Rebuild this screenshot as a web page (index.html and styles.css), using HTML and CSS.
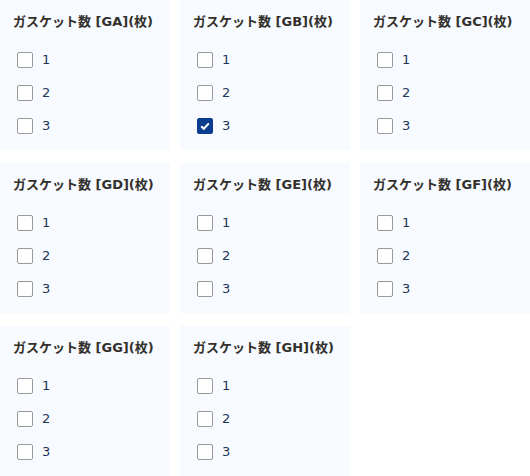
FILE: index.html
```html
<!DOCTYPE html>
<html lang="ja">
<head>
  <meta charset="UTF-8">
  <title>ガスケット数</title>
  <link rel="stylesheet" href="styles.css">
</head>
<body>
  <div class="grid">
    <div class="card">
      <div class="title">ガスケット数 [GA](枚)</div>
      <label class="opt"><span class="box"></span>1</label>
      <label class="opt"><span class="box"></span>2</label>
      <label class="opt"><span class="box"></span>3</label>
    </div>
    <div class="card">
      <div class="title">ガスケット数 [GB](枚)</div>
      <label class="opt"><span class="box"></span>1</label>
      <label class="opt"><span class="box"></span>2</label>
      <label class="opt"><span class="box checked"><svg width="12" height="12" viewBox="0 0 12 12"><path d="M2.2 6.3 L4.8 8.8 L9.8 3.4" fill="none" stroke="#fff" stroke-width="2"/></svg></span>3</label>
    </div>
    <div class="card">
      <div class="title">ガスケット数 [GC](枚)</div>
      <label class="opt"><span class="box"></span>1</label>
      <label class="opt"><span class="box"></span>2</label>
      <label class="opt"><span class="box"></span>3</label>
    </div>
    <div class="card">
      <div class="title">ガスケット数 [GD](枚)</div>
      <label class="opt"><span class="box"></span>1</label>
      <label class="opt"><span class="box"></span>2</label>
      <label class="opt"><span class="box"></span>3</label>
    </div>
    <div class="card">
      <div class="title">ガスケット数 [GE](枚)</div>
      <label class="opt"><span class="box"></span>1</label>
      <label class="opt"><span class="box"></span>2</label>
      <label class="opt"><span class="box"></span>3</label>
    </div>
    <div class="card">
      <div class="title">ガスケット数 [GF](枚)</div>
      <label class="opt"><span class="box"></span>1</label>
      <label class="opt"><span class="box"></span>2</label>
      <label class="opt"><span class="box"></span>3</label>
    </div>
    <div class="card">
      <div class="title">ガスケット数 [GG](枚)</div>
      <label class="opt"><span class="box"></span>1</label>
      <label class="opt"><span class="box"></span>2</label>
      <label class="opt"><span class="box"></span>3</label>
    </div>
    <div class="card">
      <div class="title">ガスケット数 [GH](枚)</div>
      <label class="opt"><span class="box"></span>1</label>
      <label class="opt"><span class="box"></span>2</label>
      <label class="opt"><span class="box"></span>3</label>
    </div>
  </div>
</body>
</html>
```

FILE: styles.css
```css
* {
  box-sizing: border-box;
}

body {
  margin: 0;
  background: #fff;
  font-family: "DejaVu Sans", "Noto Sans CJK JP", sans-serif;
  font-size: 13px;
}

/* three columns of cards */
.grid {
  display: grid;
  grid-template-columns: repeat(3, 170px);
  grid-auto-rows: 150px;
  column-gap: 10px;
  row-gap: 13px;
}

.card {
  background: #f7fbff;
  padding: 13px 13px 0 17px;
}

.title {
  margin-left: -4px;
  font-weight: bold;
  color: #332f2b;
  line-height: 18px;
  margin-bottom: 12px;
  white-space: nowrap;
}

.opt {
  display: flex;
  align-items: center;
  gap: 9px;
  height: 33px;
  color: #1d3557;
  cursor: pointer;
}

.box {
  width: 16px;
  height: 16px;
  border: 1px solid #999;
  border-radius: 2px;
  background: #fff;
  display: flex;
  align-items: center;
  justify-content: center;
}

.box.checked {
  background: #0a3d8f;
  border-color: #0a3d8f;
}
```
